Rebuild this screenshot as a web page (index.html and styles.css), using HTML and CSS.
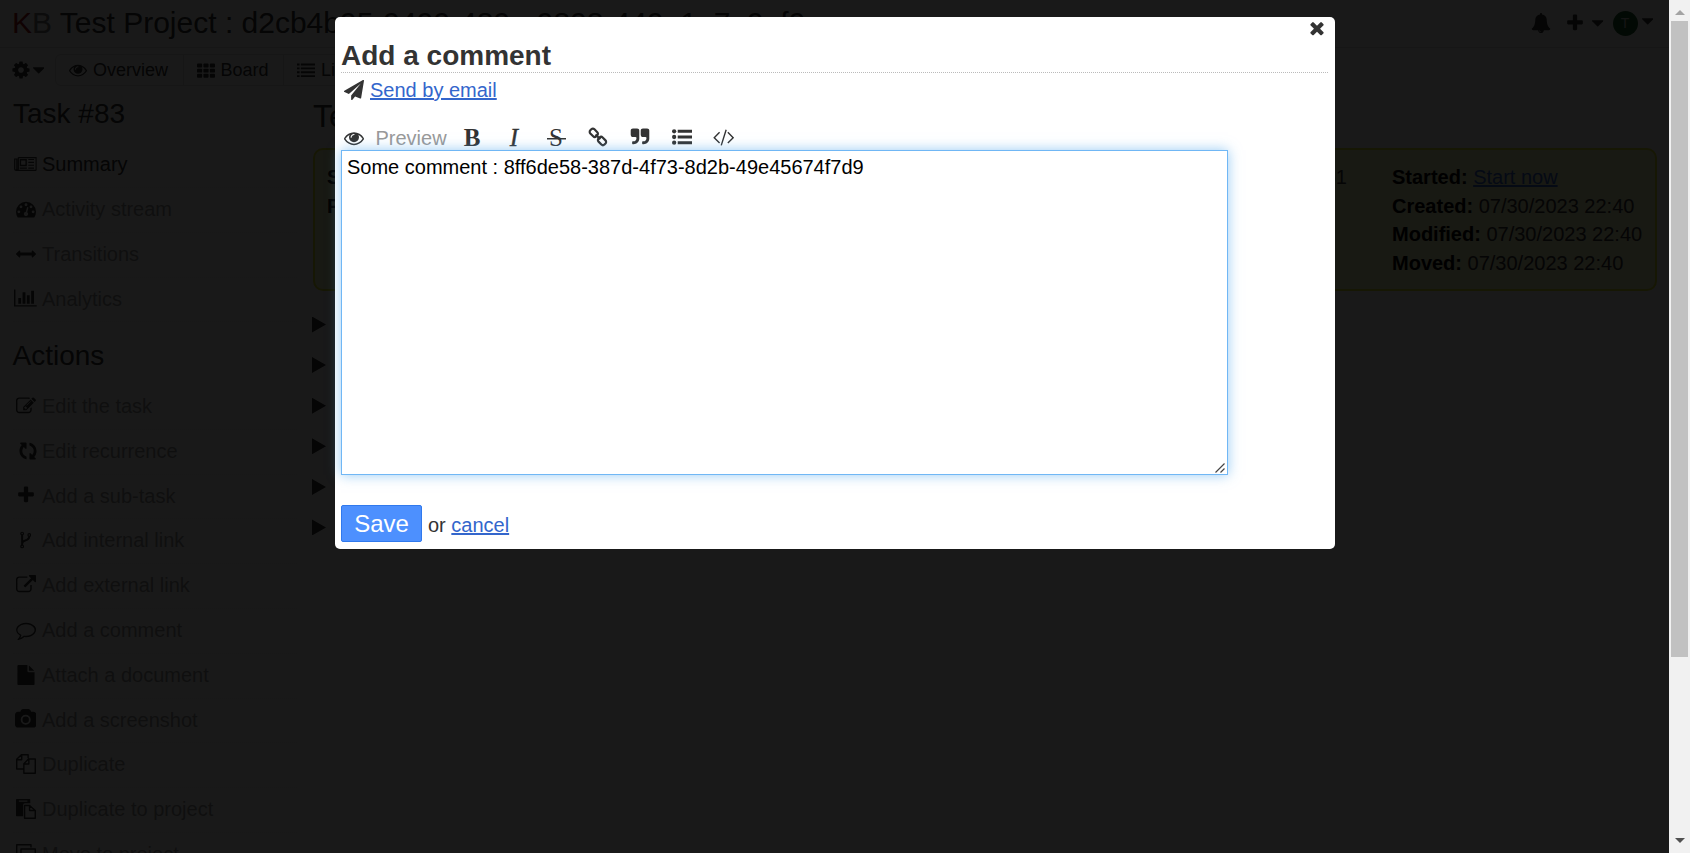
FILE: index.html
```
<!DOCTYPE html>
<html lang="en">
<head>
<meta charset="utf-8">
<title>Test Project - Add a comment</title>
<link rel="stylesheet" href="styles.css">
</head>
<body>
<svg class="sprite" aria-hidden="true">
  <symbol id="eye" viewBox="0 0 1792 1792"><path d="M1664 960q-152-236-381-353 61 104 61 225 0 185-131.5 316.5t-316.5 131.5-316.5-131.5-131.5-316.5q0-121 61-225-229 117-381 353 133 205 333.5 326.5t434.5 121.5 434.5-121.5 333.5-326.5zm-720-384q0-20-14-34t-34-14q-125 0-214.5 89.5t-89.5 214.5q0 20 14 34t34 14 34-14 14-34q0-86 61-147t147-61q20 0 34-14t14-34zm848 384q0 34-20 69-140 230-376.5 368.5t-499.5 138.5-499.5-139-376.5-368q-20-35-20-69t20-69q140-229 376.5-368t499.5-139 499.5 139 376.5 368q20 35 20 69z"/></symbol>
  <symbol id="cog" viewBox="0 0 1792 1792"><path d="M1152 896q0-106-75-181t-181-75-181 75-75 181 75 181 181 75 181-75 75-181zm512-109v222q0 12-8 23t-20 13l-185 28q-19 54-39 91 35 50 107 138 10 12 10 25t-9 23q-27 37-99 108t-94 71q-12 0-26-9l-138-108q-44 23-91 38-16 136-29 186-7 28-36 28h-222q-14 0-24.5-8.5t-11.5-21.5l-28-184q-49-16-90-37l-141 107q-10 9-25 9-14 0-25-11-126-114-165-168-7-10-7-23 0-12 8-23 15-21 51-66.5t54-70.5q-27-50-41-99l-183-27q-13-2-21-12.5t-8-23.5v-222q0-12 8-23t19-13l186-28q14-46 39-92-40-57-107-138-10-12-10-24 0-10 9-23 26-36 98.5-107.5t94.5-71.5q13 0 26 10l138 107q44-23 91-38 16-136 29-186 7-28 36-28h222q14 0 24.5 8.5t11.5 21.5l28 184q49 16 90 37l142-107q9-9 24-9 13 0 25 10 129 119 165 170 7 8 7 22 0 12-8 23-15 21-51 66.5t-54 70.5q26 50 41 98l183 28q13 2 21 12.5t8 23.5z"/></symbol>
  <symbol id="caret" viewBox="0 0 1024 1792"><path d="M1024 704q0 26-19 45l-448 448q-19 19-45 19t-45-19l-448-448q-19-19-19-45t19-45 45-19h896q26 0 45 19t19 45z"/></symbol>
  <symbol id="th" viewBox="0 0 1792 1792"><g id="throw"><rect x="0" y="256" width="512" height="384" rx="90"/><rect x="640" y="256" width="512" height="384" rx="90"/><rect x="1280" y="256" width="512" height="384" rx="90"/></g><use href="#throw" y="512"/><use href="#throw" y="1024"/></symbol>
  <symbol id="list" viewBox="0 0 1792 1792"><path d="M0 256h256v192H0zM384 256h1408v192H384zM0 640h256v192H0zM384 640h1408v192H384zM0 1024h256v192H0zM384 1024h1408v192H384zM0 1408h256v192H0zM384 1408h1408v192H384z"/></symbol>
  <symbol id="bell" viewBox="0 0 1792 1792"><path d="M912 1696q0-16-16-16-59 0-101.5-42.5t-42.5-101.5q0-16-16-16t-16 16q0 73 51.5 124.5t124.5 51.5q16 0 16-16zm816-288q0 52-38 90t-90 38h-448q0 106-75 181t-181 75-181-75-75-181h-448q-52 0-90-38t-38-90q50-42 91-88t85-119.5 74.5-158.5 50-206 19.5-260q0-152 117-282.5t307-158.5q-8-19-8-39 0-40 28-68t68-28 68 28 28 68q0 20-8 39 190 28 307 158.5t117 282.5q0 139 19.5 260t50 206 74.5 158.5 85 119.5 91 88z"/></symbol>
  <symbol id="plus" viewBox="0 0 1792 1792"><path d="M1600 736v192q0 40-28 68t-68 28h-416v416q0 40-28 68t-68 28h-192q-40 0-68-28t-28-68v-416h-416q-40 0-68-28t-28-68v-192q0-40 28-68t68-28h416v-416q0-40 28-68t68-28h192q40 0 68 28t28 68v416h416q40 0 68 28t28 68z"/></symbol>
  <symbol id="close" viewBox="0 0 1792 1792"><path d="M1490 1322q0 40-28 68l-136 136q-28 28-68 28t-68-28l-294-294-294 294q-28 28-68 28t-68-28l-136-136q-28-28-28-68t28-68l294-294-294-294q-28-28-28-68t28-68l136-136q28-28 68-28t68 28l294 294 294-294q28-28 68-28t68 28l136 136q28 28 28 68t-28 68l-294 294 294 294q28 28 28 68z"/></symbol>
  <symbol id="plane" viewBox="0 0 1792 1792"><path d="M1764 11q33 24 27 64l-256 1536q-5 29-32 45-14 8-31 8-11 0-24-5l-453-185-242 295q-18 23-49 23-13 0-22-4-19-7-30.5-23.5t-11.5-36.5v-349l864-1059-1069 925-395-162q-37-14-40-55-2-40 32-59l1664-960q15-9 32-9 20 0 36 11z"/></symbol>
  <symbol id="news" viewBox="0 0 2048 1792"><path fill="none" stroke="currentColor" stroke-width="110" d="M384 320H1984V1408q0 64-64 64H192q-128 0-128-128V448H256V1344q0 128-128 128M384 320V1344q0 128-128 128"/><path fill-rule="evenodd" d="M512 448h640v640H512zM640 576v384h384V576zM1280 448h512v100h-512zM1280 704h512v100h-512zM1280 960h512v100h-512zM512 1216h640v100H512zM1280 1216h512v100h-512z"/></symbol>
  <symbol id="tach" viewBox="0 0 1792 1792"><path fill-rule="evenodd" d="M0 1152a896 896 0 1 1 1792 0q0 261-141 483-19 29-54 29H195q-35 0-54-29Q0 1414 0 1152zM128 1152a128 128 0 1 0 256 0a128 128 0 1 0-256 0zM320 704a128 128 0 1 0 256 0a128 128 0 1 0-256 0zM768 512a128 128 0 1 0 256 0a128 128 0 1 0-256 0zM1216 704a128 128 0 1 0 256 0a128 128 0 1 0-256 0zM1408 1152a128 128 0 1 0 256 0a128 128 0 1 0-256 0zM1004 1185l101-382q6-26-7.500-48.500t-38.500-29.500-48 6.500-30 39.500l-101 382q-60 5-107 43.500t-63 98.500q-20 77 20 146t117 89 146-20 89-117q16-60-6-117t-72-91z"/></symbol>
  <symbol id="arrows" viewBox="0 0 1792 1792"><path d="M1792 896q0 26-19 45l-256 256q-19 19-45 19t-45-19-19-45v-128h-1024v128q0 26-19 45t-45 19-45-19l-256-256q-19-19-19-45t19-45l256-256q19-19 45-19t45 19 19 45v128h1024v-128q0-26 19-45t45-19 45 19l256 256q19 19 19 45z"/></symbol>
  <symbol id="chart" viewBox="0 0 2048 1792"><path d="M640 896v512h-256v-512h256zm384-512v1024h-256v-1024h256zm1024 1152v128h-2048v-1536h128v1408h1920zm-640-896v768h-256v-768h256zm384-384v1152h-256v-1152h256z"/></symbol>
  <symbol id="edit" viewBox="0 0 1792 1792"><path d="M888 1184l116-116-152-152-116 116v56h96v96h56zm440-720q-16-16-33 1l-350 350q-17 17-1 33t33-1l350-350q17-17 1-33zm80 594v190q0 119-84.500 203.500t-203.500 84.500h-832q-119 0-203.500-84.500t-84.500-203.500v-832q0-119 84.500-203.500t203.500-84.500h832q63 0 117 25 15 7 18 23 3 17-9 29l-49 49q-14 14-32 8-23-6-45-6h-832q-66 0-113 47t-47 113v832q0 66 47 113t113 47h832q66 0 113-47t47-113v-126q0-13 9-22l64-64q15-15 35-7t20 29zm-96-738l288 288-672 672h-288v-288zm444 132l-92 92-288-288 92-92q28-28 68-28t68 28l152 152q28 28 28 68t-28 68z"/></symbol>
  <symbol id="refresh" viewBox="0 0 1792 1792"><path transform="rotate(90 896 896)" d="M1639 1056q0 5-1 7-64 268-268 434.500t-478 166.500q-146 0-282.500-55t-243.500-157l-129 129q-19 19-45 19t-45-19-19-45v-448q0-26 19-45t45-19h448q26 0 45 19t19 45-19 45l-137 137q71 66 161 102t187 36q134 0 250-65t186-179q11-17 53-117 8-23 30-23h192q13 0 22.500 9.500t9.500 22.500zm25-800v448q0 26-19 45t-45 19h-448q-26 0-45-19t-19-45 19-45l138-138q-148-137-349-137-134 0-250 65t-186 179q-11 17-53 117-8 23-30 23h-199q-13 0-22.500-9.500t-9.500-22.500v-7q65-268 270-434.500t480-166.500q146 0 284 55.500t245 156.500l130-129q19-19 45-19t45 19 19 45z"/></symbol>
  <symbol id="fork" viewBox="0 0 1024 1792"><g fill="none" stroke="currentColor" stroke-width="110"><circle cx="192" cy="320" r="120"/><circle cx="192" cy="1472" r="120"/><circle cx="832" cy="448" r="120"/></g><path fill="none" stroke="currentColor" stroke-width="180" d="M192 440V1352M832 568q0 230-220 320l-200 75q-200 60-220 260"/></symbol>
  <symbol id="external" viewBox="0 0 1792 1792"><path d="M1408 928v320q0 119-84.500 203.500t-203.500 84.500h-832q-119 0-203.500-84.500t-84.500-203.500v-832q0-119 84.500-203.500t203.500-84.500h704q14 0 23 9t9 23v64q0 14-9 23t-23 9h-704q-66 0-113 47t-47 113v832q0 66 47 113t113 47h832q66 0 113-47t47-113v-320q0-14 9-23t23-9h64q14 0 23 9t9 23zm384-864v512q0 26-19 45t-45 19-45-19l-176-176-652 652q-10 10-23 10t-23-10l-114-114q-10-10-10-23t10-23l652-652-176-176q-19-19-19-45t19-45 45-19h512q26 0 45 19t19 45z"/></symbol>
  <symbol id="comment" viewBox="0 0 1792 1792"><path d="M896 384q-204 0-381.500 69.500t-282 187.500-104.500 255q0 112 71.500 213.500t201.500 175.500l87 50-27 96q-24 91-70 172 152-63 275-171l43-38 57 6q69 8 130 8 204 0 381.500-69.500t282-187.500 104.500-255-104.500-255-282-187.500-381.500-69.500zm896 512q0 174-120 321.500t-326 233-450 85.500q-70 0-145-8-198 175-460 242-49 14-114 22h-5q-15 0-27-10.500t-16-27.500q20-60 110-150 70-80 110-220-157-89-247.500-220t-90.500-281q0-174 120-321.500t326-233 450-85.500 450 85.500 326 233 120 321.500z"/></symbol>
  <symbol id="file" viewBox="0 0 1792 1792"><path d="M1152 512v-472q22 14 36 28l408 408q14 14 28 36h-472zm-128 32q0 40 28 68t68 28h544v1056q0 40-28 68t-68 28h-1344q-40 0-68-28t-28-68v-1600q0-40 28-68t68-28h800v544z"/></symbol>
  <symbol id="camera" viewBox="0 0 1920 1792"><path fill-rule="evenodd" d="M256 256h224l51-136q19-49 69.500-84.500T704 0h512q53 0 103.500 35.500T1389 120l51 136h224q106 0 181 75t75 181v896q0 106-75 181t-181 75H256q-106 0-181-75T0 1408V512q0-106 75-181t181-75zM512 960a448 448 0 1 0 896 0a448 448 0 1 0-896 0zM672 960a288 288 0 1 1 576 0a288 288 0 1 1-576 0z"/></symbol>
  <symbol id="files" viewBox="0 0 1792 1792"><path fill="none" stroke="currentColor" stroke-width="128" stroke-linejoin="round" d="M704 1344H64V480L480 64H1088V384M64 512H512V64M704 1728V864L1120 448H1728V1728ZM704 896H1152V448"/></symbol>
  <symbol id="paste" viewBox="0 0 1792 1792"><path fill-rule="evenodd" d="M60 0H1220Q1280 0 1280 60V384H800Q640 384 640 544V1536H60Q0 1536 0 1476V60Q0 0 60 0zM256 128V256H1024V128z"/><path fill="none" stroke="currentColor" stroke-width="128" stroke-linejoin="round" d="M768 576H1216L1728 1024V1728H768ZM1216 512V1024H1728"/></symbol>
  <symbol id="clone" viewBox="0 0 1792 1792"><path fill="none" stroke="currentColor" stroke-width="128" stroke-linejoin="round" d="M1344 320V64H64V1344H320M448 448H1728V1728H448Z"/></symbol>
  <symbol id="chain" viewBox="0 0 20 20"><g fill="none" stroke="currentColor" stroke-width="2.200"><rect x="-4.200" y="-2.900" width="8.400" height="5.800" rx="2.200" transform="translate(5.800 5.800) rotate(45)"/><rect x="-4.200" y="-2.900" width="8.400" height="5.800" rx="2.200" transform="translate(14 14) rotate(45)"/><path d="M7.500 7.500l4.800 4.800"/></g></symbol>
  <symbol id="quote" viewBox="0 0 1792 1792"><path id="q" d="M832 320v704q0 104-40.500 198.500t-109.500 163.500-163.500 109.500-198.500 40.500h-64q-26 0-45-19t-19-45v-128q0-26 19-45t45-19h64q106 0 181-75t75-181v-32q0-40-28-68t-68-28h-224q-80 0-136-56t-56-136v-384q0-80 56-136t136-56h384q80 0 136 56t56 136z"/><use href="#q" x="896"/></symbol>
  <symbol id="bullets" viewBox="0 0 1792 1792"><circle cx="192" cy="384" r="192"/><circle cx="192" cy="896" r="192"/><circle cx="192" cy="1408" r="192"/><path d="M512 256h1280v256H512zM512 768h1280v256H512zM512 1280h1280v256H512z"/></symbol>
  <symbol id="code" viewBox="0 0 1920 1792"><path fill="none" stroke="currentColor" stroke-width="125" d="M590 480L110 960L590 1440M1330 480L1810 960L1330 1440M1180 250L740 1650"/></symbol>
</svg>

<div class="screen">
  <div class="page">
    <header class="header">
      <div class="title"><span class="logo"><span class="logo-k">K</span>B</span> Test Project : d2cb4b95-9499-489e-9898-449e1e7a9ef9</div>
      <div class="user">
        <svg class="i"><use href="#bell"/></svg>
        <span class="new"><svg class="i"><use href="#plus"/></svg><svg class="i caret"><use href="#caret"/></svg></span>
        <span class="me"><span class="avatar">T</span><svg class="i caret up"><use href="#caret"/></svg></span>
      </div>
    </header>
    <div class="views">
      <span class="settings"><svg class="i"><use href="#cog"/></svg><svg class="i caret"><use href="#caret"/></svg></span>
      <ul class="tabs">
        <li><svg class="i"><use href="#eye"/></svg>Overview</li>
        <li><svg class="i"><use href="#th"/></svg>Board</li>
        <li><svg class="i"><use href="#list"/></svg>List</li>
      </ul>
    </div>
    <div class="columns">
      <nav class="sidebar">
        <h2>Task #83</h2>
        <ul>
          <li class="active"><span class="fw"><svg class="i wide"><use href="#news"/></svg></span>Summary</li>
          <li><span class="fw"><svg class="i"><use href="#tach"/></svg></span>Activity stream</li>
          <li><span class="fw"><svg class="i"><use href="#arrows"/></svg></span>Transitions</li>
          <li><span class="fw"><svg class="i wide"><use href="#chart"/></svg></span>Analytics</li>
        </ul>
        <h2 class="second">Actions</h2>
        <ul>
          <li><span class="fw"><svg class="i"><use href="#edit"/></svg></span>Edit the task</li>
          <li><span class="fw turn"><svg class="i"><use href="#refresh"/></svg></span>Edit recurrence</li>
          <li><span class="fw"><svg class="i"><use href="#plus"/></svg></span>Add a sub-task</li>
          <li><span class="fw"><svg class="i narrow"><use href="#fork"/></svg></span>Add internal link</li>
          <li><span class="fw"><svg class="i"><use href="#external"/></svg></span>Add external link</li>
          <li><span class="fw"><svg class="i"><use href="#comment"/></svg></span>Add a comment</li>
          <li><span class="fw"><svg class="i"><use href="#file"/></svg></span>Attach a document</li>
          <li><span class="fw"><svg class="i mid"><use href="#camera"/></svg></span>Add a screenshot</li>
          <li><span class="fw"><svg class="i"><use href="#files"/></svg></span>Duplicate</li>
          <li><span class="fw"><svg class="i"><use href="#paste"/></svg></span>Duplicate to project</li>
          <li><span class="fw"><svg class="i"><use href="#clone"/></svg></span>Move to project</li>
        </ul>
      </nav>
      <main class="main">
        <h1>Test</h1>
        <section class="summary">
          <div class="col"><p><b>Status:</b> open</p><p><b>Priority:</b> 0</p></div>
          <div class="col last"><p>61</p></div>
          <div class="col dates">
            <p><b>Started:</b> <a>Start now</a></p>
            <p><b>Created:</b> 07/30/2023 22:40</p>
            <p><b>Modified:</b> 07/30/2023 22:40</p>
            <p><b>Moved:</b> 07/30/2023 22:40</p>
          </div>
        </section>
        <div class="folds"><i></i><i></i><i></i><i></i><i></i><i></i></div>
      </main>
    </div>
    <div class="overlay"></div>
    <div class="modal">
      <svg class="i close"><use href="#close"/></svg>
      <h2>Add a comment</h2>
      <div class="email"><svg class="i"><use href="#plane"/></svg><a>Send by email</a></div>
      <div class="toolbar">
        <svg class="i"><use href="#eye"/></svg><span class="preview">Preview</span>
        <span class="tool serif bold">B</span>
        <span class="tool serif italic">I</span>
        <span class="tool serif strike">S</span>
        <span class="tool"><svg class="i"><use href="#chain"/></svg></span>
        <span class="tool"><svg class="i"><use href="#quote"/></svg></span>
        <span class="tool"><svg class="i"><use href="#bullets"/></svg></span>
        <span class="tool"><svg class="i mid"><use href="#code"/></svg></span>
      </div>
      <div class="editor">Some comment : 8ff6de58-387d-4f73-8d2b-49e45674f7d9
        <svg class="grip" viewBox="0 0 10 10"><path d="M.5 9.500L9.500 .5M5.500 9.500L9.500 5.500"/></svg>
      </div>
      <div class="actions"><span class="save">Save</span><span class="or">or <a>cancel</a></span></div>
    </div>
  </div>
  <div class="scrollbar"><div class="arrow-up"></div><div class="thumb"></div><div class="arrow-down"></div></div>
</div>
</body>
</html>
```
FILE: styles.css
```
* { box-sizing: border-box; }
body, h1, h2, ul, p { margin: 0; padding: 0; }
body { font: 20px "Liberation Sans", Arial, sans-serif; color: #333; background: #fff; overflow: hidden; }
ul { list-style: none; }
h1, h2 { font-weight: normal; }
a { color: #36c; text-decoration: underline; }
.sprite { position: absolute; width: 0; height: 0; }
.i { width: 1em; height: 1em; fill: currentColor; vertical-align: -.143em; flex: none; }
.i.wide { width: 1.143em; }
.i.mid { width: 1.071em; }
.i.narrow, .i.caret { width: .571em; }

.screen { display: flex; width: 1690px; height: 853px; overflow: hidden; }
.page { position: relative; width: 1669px; overflow: hidden; flex: none; }
.overlay { position: absolute; inset: 0; background: rgba(0, 0, 0, .9); }

.header { display: flex; justify-content: space-between; height: 48px; padding: 0 16px 0 12px; border-bottom: 1px solid #dedede; }
.title { font-size: 30px; line-height: 46px; white-space: nowrap; }
.logo { color: #777; }
.logo-k { color: #a01414; }
.user { display: flex; align-items: center; height: 45px; }
.new { display: flex; margin-left: 14px; }
.new .caret { margin-left: 7px; }
.me { display: flex; align-items: center; margin-left: 9px; padding-top: 2px; }
.me .up { margin: -5px 0 0 4px; }
.avatar { display: block; width: 25px; height: 25px; border-radius: 50%; background: #1c5a28; color: #ccc; font-size: 14px; line-height: 25px; text-align: center; }

.views { display: flex; height: 38px; padding: 6px 0 0 11px; font-size: 18px; line-height: 30px; }
.settings { width: 44px; font-size: 20px; white-space: nowrap; line-height: 32px; }
.settings .caret { margin-left: 2px; }
.tabs { display: flex; height: 32px; border: 1px solid #ddd; border-radius: 6px; }
.tabs li { padding: 0 14.500px 0 13px; border-right: 1px solid #ddd; white-space: nowrap; }
.tabs li:last-child { border-right: 0; }
.tabs .i { margin-right: 6px; }

.columns { display: flex; }
.sidebar { width: 284px; margin-left: 13px; flex: none; }
.sidebar h2 { height: 57.200px; font-size: 28px; line-height: 56px; }
.sidebar h2.second { height: 62.600px; line-height: 68px; text-indent: -.5px; }
.sidebar li { height: 44.800px; line-height: 43px; border-bottom: 1px dotted #efefef; color: #999; white-space: nowrap; }
.sidebar li.active { color: #333; }
.fw { display: inline-block; width: 25px; margin-right: 4px; text-align: center; color: #333; }
.fw.turn { padding-left: 5px; }

.main { width: 1344px; margin-left: 16px; }
.main h1 { height: 62px; font-size: 32px; line-height: 61px; }
.summary { display: flex; height: 143px; padding: 13px 12px 0 12px; border: 2px solid #dfe32d; border-radius: 10px; background: #f5f7c4; line-height: 28.600px; }
.summary b { color: #000; }
.last { margin-left: auto; }
.dates { width: 250px; margin: 0 1px 0 45px; white-space: nowrap; }
.folds { display: flex; flex-direction: column; gap: 24.600px; padding-top: 25.500px; }
.folds i { width: 14px; height: 16px; background: #333; clip-path: polygon(0 0, 100% 50%, 0 100%); margin-left: -1px; }

.modal { position: absolute; left: 335px; top: 17px; width: 1000px; height: 532px; padding: 16px 7px 0 6px; background: #fff; border-radius: 5px; }
.close { position: absolute; left: 972px; top: 1px; }
.modal h2 { height: 40px; border-bottom: 1px dotted #bbb; font-size: 28px; font-weight: bold; line-height: 45px; }
.email { height: 33px; line-height: 34px; }
.email .i { margin: 0 6.500px 0 2.500px; }
.toolbar { display: flex; align-items: center; height: 28px; margin-top: 16px; padding: 3px 0 0 2.500px; line-height: 24px; }
.preview { width: 87.500px; padding-left: 12px; color: #999; }
.tool { width: 42px; text-align: center; }
.serif { font-family: "Liberation Serif", serif; font-size: 25px; }
.bold { font-weight: bold; }
.italic { font-style: italic; -webkit-text-stroke: .4px #333; }
.strike { background: linear-gradient(#333, #333) center 55% / 19px 1.500px no-repeat; }
.editor { position: relative; width: 887px; height: 325px; padding: 5px 5px; border: 1px solid #70b7f5; box-shadow: 0 0 12px rgba(82, 168, 236, .6); color: #000; line-height: 23px; }
.grip { position: absolute; right: 2px; bottom: 1px; width: 10px; height: 10px; fill: none; stroke: #444; stroke-width: 1.200; }
.actions { display: flex; align-items: flex-start; gap: 6px; margin-top: 30px; }
.or { line-height: 40px; }
.save { width: 81px; height: 37px; border: 1px solid #3079ed; border-radius: 2px; background: #4d90fe; color: #fff; font-size: 24px; line-height: 35px; text-align: center; }

.scrollbar { display: flex; flex-direction: column; align-items: center; width: 21px; background: #f1f1f1; padding: 10px 0; }
.arrow-up { border: 5px solid transparent; border-top: 0; border-bottom: 5px solid #a3a3a3; }
.thumb { width: 17px; height: 636px; margin-top: 6px; background: #c1c1c1; }
.arrow-down { margin-top: auto; border: 5px solid transparent; border-bottom: 0; border-top: 5px solid #505050; }
```
